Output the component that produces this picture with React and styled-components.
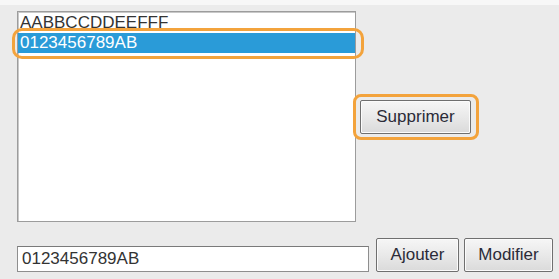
import React from 'react'
import styled, { createGlobalStyle, css } from 'styled-components'

const GlobalStyle = createGlobalStyle`
    html, body {
        margin: 0;
        padding: 0;
        background: #ebebeb;
    }
    body {
        font-family: "Liberation Sans", Arial, sans-serif;
        font-size: 17px;
    }
`

const Page = styled.div`
    width: 559px;
    height: 279px;
    box-sizing: border-box;
    padding: 11px 0 0 17px;
    background: linear-gradient(to bottom, #f7f7f7 0, #f7f7f7 5px, #ebebeb 5px);
`

const TopRow = styled.div`
    display: flex;
    align-items: center;
    gap: 4px;
`

const ListBox = styled.div`
    position: relative;
    width: 339px;
    height: 211px;
    box-sizing: border-box;
    padding-top: 1px;
    background: #fff;
    border: 1px solid #9c9c9c;
    box-shadow: inset 1px 1px 0 #c8c8c8;
`

const ringMixin = css`
    &::after {
        content: '';
        position: absolute;
        border: 3px solid #f3a33c;
        pointer-events: none;
    }
`

const Item = styled.div`
    position: relative;
    height: 20px;
    line-height: 20px;
    padding-left: 2px;
    color: ${p => (p.$selected ? '#fff' : '#333')};
    background: ${p => (p.$selected ? '#2a9bd8' : 'transparent')};
    white-space: nowrap;
    ${p => p.$selected && ringMixin};
    &::after {
        top: -5px;
        bottom: -6px;
        left: -6px;
        right: -9px;
        border-radius: 10px;
    }
`

const Button = styled.button`
    position: relative;
    box-sizing: border-box;
    width: ${p => p.$w}px;
    height: 34px;
    padding: 0;
    font-family: "Liberation Sans", Arial, sans-serif;
    font-size: 17px;
    color: #2b2b38;
    background: linear-gradient(to bottom, #f6f6f6 0%, #e9e9e9 50%, #dadada 100%);
    border: 1px solid #6f6f6f;
    border-radius: 2px;
    box-shadow: inset 0 0 0 1px #fbfbfb;
    ${p => p.$focused && ringMixin};
    &::after {
        top: -7px;
        bottom: -7px;
        left: -8px;
        right: -9px;
        border-radius: 8px;
    }
`

const BottomRow = styled.div`
    display: flex;
    align-items: flex-end;
    margin-top: 16px;
`

const TextInput = styled.input`
    box-sizing: border-box;
    width: 352px;
    height: 26px;
    margin: 0 7px 0 0;
    padding: 0 4px;
    font-family: "Liberation Sans", Arial, sans-serif;
    font-size: 17px;
    color: #333;
    background: #fff;
    border: 1px solid #8e8e8e;
    border-top-color: #7a7a7a;
    outline: none;
`

const Gap = styled.div`
    width: ${p => p.$w}px;
`

const items = ['AABBCCDDEEFFF', '0123456789AB']

export default function App() {
    return (
        <Page>
            <GlobalStyle />
            <TopRow>
                <ListBox>
                    {items.map((it, i) => (
                        <Item key={it} $selected={i === 1}>
                            {it}
                        </Item>
                    ))}
                </ListBox>
                <Button $w={111} $focused>
                    Supprimer
                </Button>
            </TopRow>
            <BottomRow>
                <TextInput defaultValue="0123456789AB" />
                <Button $w={83}>Ajouter</Button>
                <Gap $w={5} />
                <Button $w={89}>Modifier</Button>
            </BottomRow>
        </Page>
    )
}
